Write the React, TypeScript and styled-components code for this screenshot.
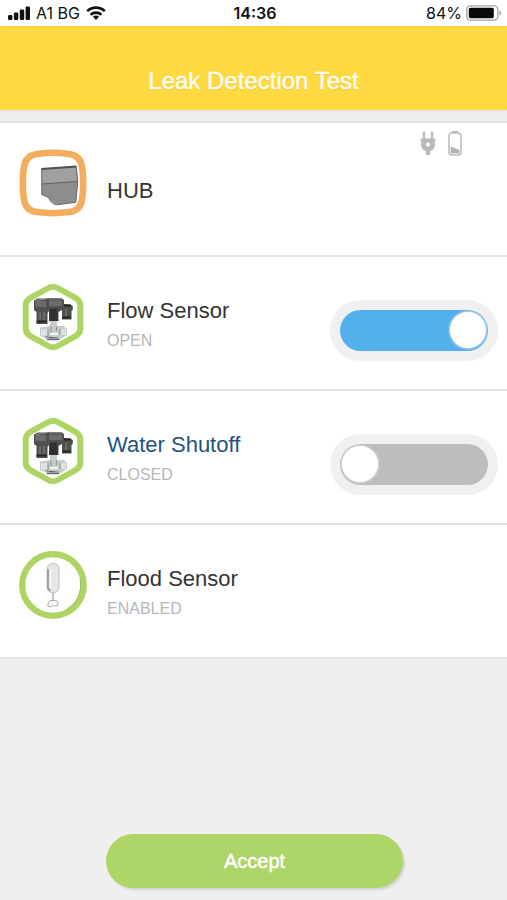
import React, { useState } from "react";
import styled, { createGlobalStyle } from "styled-components";

const GlobalStyle = createGlobalStyle`
  * { box-sizing: border-box; }
  body {
    margin: 0;
    background: #efefef;
    font-family: "Liberation Sans", Arial, sans-serif;
    color: #343436;
  }
`;

const Page = styled.div`
  display: flex;
  flex-direction: column;
  min-height: 100vh;
`;

const StatusBar = styled.div`
  display: grid;
  grid-template-columns: 1fr auto 1fr;
  align-items: center;
  height: 26px;
  padding: 0 5px 0 8px;
  background: #fff;
  color: #111;
  font-family: Inter, sans-serif;
  font-size: 16px;
  line-height: 24px;
`;

const StatusGroup = styled.div<{ $end?: boolean }>`
  display: flex;
  align-items: center;
  justify-content: ${(p) => (p.$end ? "flex-end" : "flex-start")};
  gap: ${(p) => (p.$end ? 4 : 6)}px;
`;

const Clock = styled.time`
  font-weight: 600;
`;

const Header = styled.header`
  display: flex;
  justify-content: center;
  padding: 40px 16px 14px;
  background: #ffd941;
  box-shadow: 0 1px 2px #dddddd;
`;

const Title = styled.h1`
  margin: 0;
  font-size: 24px;
  line-height: 30px;
  font-weight: 400;
  color: #fffdf0;
  -webkit-text-stroke: 0.5px #fffdf0;
  text-shadow: 0 1px 1px #e9c33c;
`;

const DeviceList = styled.ul`
  list-style: none;
  margin: 11px 0 0;
  padding: 0;
  border-top: 2px solid #e1e3e3;
`;

const DeviceRow = styled.li`
  display: flex;
  align-items: center;
  min-height: 134px;
  padding: 0 9px 0 19px;
  border-bottom: 2px solid #e3e3e3;
  background: #fff;
`;

const DeviceIcon = styled.svg`
  flex: none;
  width: 68px;
  height: 68px;
  margin: 0 20px 12px 0;
`;

const DeviceText = styled.div<{ $hasState: boolean }>`
  flex: 1;
  padding-top: ${(p) => (p.$hasState ? 6 : 3)}px;
`;

const DeviceName = styled.h2<{ $accent?: boolean }>`
  margin: 0;
  font-size: 22px;
  line-height: 30px;
  font-weight: 400;
  color: ${(p) => (p.$accent ? "#225480" : "#343436")};
`;

const DeviceState = styled.p`
  margin: 0;
  font-size: 16px;
  line-height: 30px;
  color: #b7b7b7;
`;

const PowerIcons = styled.div`
  display: flex;
  align-self: flex-start;
  gap: 12px;
  padding: 8px 36px 0 0;
`;

const ToggleShell = styled.label`
  flex: none;
  display: flex;
  margin-top: 14px;
  padding: 10px;
  border-radius: 31px;
  background: #f0f0f0;
  cursor: pointer;
`;

const ToggleInput = styled.input`
  appearance: none;
  display: flex;
  align-items: center;
  width: 148px;
  height: 41px;
  margin: 0;
  padding: 0 2px;
  border-radius: 21px;
  background: #bdbdbd;
  cursor: pointer;

  &::before {
    content: "";
    width: 36px;
    height: 36px;
    border-radius: 50%;
    background: #fff;
    box-shadow: 0 0 2px 1px rgba(225, 225, 225, 0.8);
  }

  &:checked {
    justify-content: flex-end;
    background: #54b0ec;
  }
`;

const Footer = styled.footer`
  display: flex;
  justify-content: center;
  margin-top: auto;
  padding: 24px 0 12px 2px;
`;

const AcceptButton = styled.button`
  width: 59%;
  height: 54px;
  border: 0;
  border-radius: 27px;
  background: #add567;
  box-shadow: 2px 2px 2px #d2d2d6;
  color: #fff;
  font-family: inherit;
  font-size: 20px;
  -webkit-text-stroke: 0.5px #fff;
  cursor: pointer;
`;

function SignalIcon() {
  return (
    <svg width="22" height="14" viewBox="0 0 22 14" fill="#111" aria-hidden="true">
      <rect x="0" y="9" width="4.4" height="5" rx="1.2" />
      <rect x="5.9" y="6.5" width="4.4" height="7.5" rx="1.2" />
      <rect x="11.8" y="3.5" width="4.4" height="10.5" rx="1.2" />
      <rect x="17.6" y="0.5" width="4.4" height="13.5" rx="1.2" />
    </svg>
  );
}

function WifiIcon() {
  return (
    <svg width="20" height="14" viewBox="0 0 20 14" fill="none" stroke="#111" strokeWidth="2.6" aria-hidden="true">
      <path d="M1.2 5.2 C6 0.4 14 0.4 18.8 5.2" />
      <path d="M4.6 8.7 C7.5 5.9 12.5 5.9 15.4 8.7" />
      <path d="M10 14 L6.9 10.8 C8.6 9.2 11.4 9.2 13.1 10.8 Z" fill="#111" stroke="none" />
    </svg>
  );
}

function PhoneBatteryIcon() {
  return (
    <svg width="36" height="16" viewBox="0 0 36 16" aria-hidden="true">
      <rect x="0.8" y="0.8" width="31" height="14.4" rx="3.6" fill="#fff" stroke="#a2a2a2" strokeWidth="1.3" />
      <rect x="2.8" y="2.8" width="25" height="10.4" rx="1.6" fill="#080808" />
      <path d="M33.4 5.6 C35.8 6.4 35.8 9.6 33.4 10.4 Z" fill="#a2a2a2" />
    </svg>
  );
}

function PlugIcon() {
  return (
    <svg width="16" height="25" viewBox="0 0 16 25" role="img" aria-label="Mains power">
      <path d="M4 0.5 V8 M12 0.5 V8" stroke="#bdbdbd" strokeWidth="2.4" />
      <path
        fill="#b9b9b9"
        fillRule="evenodd"
        d="M0.5 7.5 H15.5 V10.5 H14.8 V15.5 C14.4 17.8 12.4 19.2 10.2 20 V24 H5.8 V20 C3.6 19.2 1.6 17.8 1.2 15.5 V10.5 H0.5 Z M8 11.4 A2 2 0 1 0 8 15.4 A2 2 0 1 0 8 11.4 Z"
      />
    </svg>
  );
}

function LowBatteryIcon() {
  return (
    <svg width="14" height="25" viewBox="0 0 14 25" role="img" aria-label="Low battery">
      <rect x="3.8" y="0" width="6.4" height="3" rx="1" fill="#b5b5b5" />
      <rect x="1" y="2" width="12" height="22" rx="2.8" fill="#fff" stroke="#bdbdbd" strokeWidth="1.6" />
      <path d="M2.6 15.5 L11.4 19 V22.4 H2.6 Z" fill="#b3b3b3" />
    </svg>
  );
}

function HubIcon() {
  return (
    <DeviceIcon viewBox="0 0 68 68" aria-hidden="true">
      <path
        d="M18 4.9 Q34 2.7 50 4.9 Q61.6 6.4 63.1 18 Q65.3 34 63.1 50 Q61.6 61.6 50 63.1 Q34 65.3 18 63.1 Q6.4 61.6 4.9 50 Q2.7 34 4.9 18 Q6.4 6.4 18 4.9 Z"
        fill="#fff"
        stroke="#f2ae5e"
        strokeWidth="6.6"
      />
      <path d="M22.5 19.5 L57.5 17 L58.8 33 L56.8 53.5 L37.5 55.8 L31.5 52 L29.5 48.5 L22.5 45.5 Z" fill="#8d8d8d" />
      <path d="M23 20 L57 18 L58 32.5 L23 35 Z" fill="#a0a0a0" />
      <path d="M22.5 20 L57.3 17.6" stroke="#505050" strokeWidth="2" />
      <path d="M23 35 L58.5 32.5" stroke="#626262" strokeWidth="1.2" />
      <path
        d="M22.8 19.5 V45.5 L29.5 48.5 Q32 55 37.5 55.8 L56.8 53.3 L58.8 33 L57.3 17.6"
        fill="none"
        stroke="#6b6b6b"
        strokeWidth="1"
      />
    </DeviceIcon>
  );
}

function ValveIcon() {
  return (
    <DeviceIcon viewBox="0 0 68 68" aria-hidden="true">
      <path
        d="M29.4 5 Q34 2.4 38.6 5 L57 15.2 Q61.3 17.8 61.3 22.5 V45.5 Q61.3 50.2 57 52.8 L38.6 63 Q34 65.6 29.4 63 L11 52.8 Q6.7 50.2 6.7 45.5 V22.5 Q6.7 17.8 11 15.2 Z"
        fill="#fff"
        stroke="#aed563"
        strokeWidth="6"
      />
      <path d="M15 17.5 L18.5 15.5 H27 L31 15 H42 L45 17 V21 L51 21.5 L53.8 23 V27 L52.5 28 V36.5 H43 V27 L39.5 29 V38 H30 V28 L28.5 30 V41 H17.5 V29 L15 27 Z" fill="#505050" />
      <path d="M16.5 18 H27 V24 H16.5 Z M30 17.5 H43 V23 H30 Z" fill="#6c6c6c" />
      <path d="M31 25.5 H38 L39.2 38 H30 Z" fill="#303030" />
      <path d="M17.5 38.5 H28 M43.5 34.5 H52 M45 22.5 H52" stroke="#272727" strokeWidth="1.8" />
      <path d="M21 29 V37 M25 29 V37 M47 26 V33" stroke="#777" strokeWidth="1.4" />
      <path d="M16.5 17.5 L27 16 M30 15.8 H42" stroke="#8d8d8d" strokeWidth="1" />
      <path d="M31 38 H38 V43 L45 43 L48 46 V52 L44 54.5 L40 57 H28 L25.5 54.5 L21 53 V44.5 L31 43 Z" fill="#c8cbcc" />
      <path d="M22 46 H29 V52.5 H22 Z M41 46 H47 V52 H41 Z" fill="#dfe1e2" />
      <path d="M32 43.5 V49 M37.5 43.5 V48 M26 53.5 L31 55 H40 M29 46 V53 M41 46 V52" stroke="#909496" strokeWidth="1.2" />
      <path d="M28 56.5 H40" stroke="#686868" strokeWidth="1.4" />
      <path d="M31 51 H39" stroke="#f5f5f5" strokeWidth="2" />
    </DeviceIcon>
  );
}

function FloodIcon() {
  return (
    <DeviceIcon viewBox="0 0 68 68" aria-hidden="true">
      <circle cx="34" cy="34" r="30.8" fill="#fff" stroke="#aed563" strokeWidth="6.2" />
      <path d="M48 58 A27.8 27.8 0 0 0 61.2 28" fill="none" stroke="#96b968" strokeWidth="1" />
      <rect x="28.2" y="12.5" width="11.8" height="29" rx="5" fill="#e6e6e6" stroke="#bababa" strokeWidth="0.9" />
      <path d="M29 18 V37 L31 40" fill="none" stroke="#929292" strokeWidth="1.6" />
      <path d="M31.3 18 V37" stroke="#f7f7f7" strokeWidth="1.2" />
      <path d="M34 41.5 V49" stroke="#c5c5c5" strokeWidth="2.2" />
      <path d="M31 49.5 H37.5 Q39.8 51.5 39 54.5 Q36.5 55.7 34.5 54.5 Q31.5 57 28.8 55 Q28.4 51.8 31 49.5 Z" fill="#f6f6f6" stroke="#adadad" strokeWidth="1" />
    </DeviceIcon>
  );
}

function Toggle({ label, initial }: { label: string; initial: boolean }) {
  const [on, setOn] = useState(initial);
  return (
    <ToggleShell>
      <ToggleInput
        type="checkbox"
        role="switch"
        aria-label={label}
        checked={on}
        onChange={(e) => setOn(e.target.checked)}
      />
    </ToggleShell>
  );
}

interface DeviceProps {
  icon: React.ReactNode;
  name: string;
  state?: string;
  accent?: boolean;
  children?: React.ReactNode;
}

function Device({ icon, name, state, accent, children }: DeviceProps) {
  return (
    <DeviceRow>
      {icon}
      <DeviceText $hasState={Boolean(state)}>
        <DeviceName $accent={accent}>{name}</DeviceName>
        {state && <DeviceState>{state}</DeviceState>}
      </DeviceText>
      {children}
    </DeviceRow>
  );
}

export default function App() {
  return (
    <Page>
      <GlobalStyle />
      <StatusBar>
        <StatusGroup>
          <SignalIcon />
          <span>A1 BG</span>
          <WifiIcon />
        </StatusGroup>
        <Clock>14:36</Clock>
        <StatusGroup $end>
          <span>84%</span>
          <PhoneBatteryIcon />
        </StatusGroup>
      </StatusBar>
      <Header>
        <Title>Leak Detection Test</Title>
      </Header>
      <main>
        <DeviceList>
          <Device icon={<HubIcon />} name="HUB">
            <PowerIcons>
              <PlugIcon />
              <LowBatteryIcon />
            </PowerIcons>
          </Device>
          <Device icon={<ValveIcon />} name="Flow Sensor" state="OPEN">
            <Toggle label="Flow Sensor" initial />
          </Device>
          <Device icon={<ValveIcon />} name="Water Shutoff" state="CLOSED" accent>
            <Toggle label="Water Shutoff" initial={false} />
          </Device>
          <Device icon={<FloodIcon />} name="Flood Sensor" state="ENABLED" />
        </DeviceList>
      </main>
      <Footer>
        <AcceptButton type="button">Accept</AcceptButton>
      </Footer>
    </Page>
  );
}
